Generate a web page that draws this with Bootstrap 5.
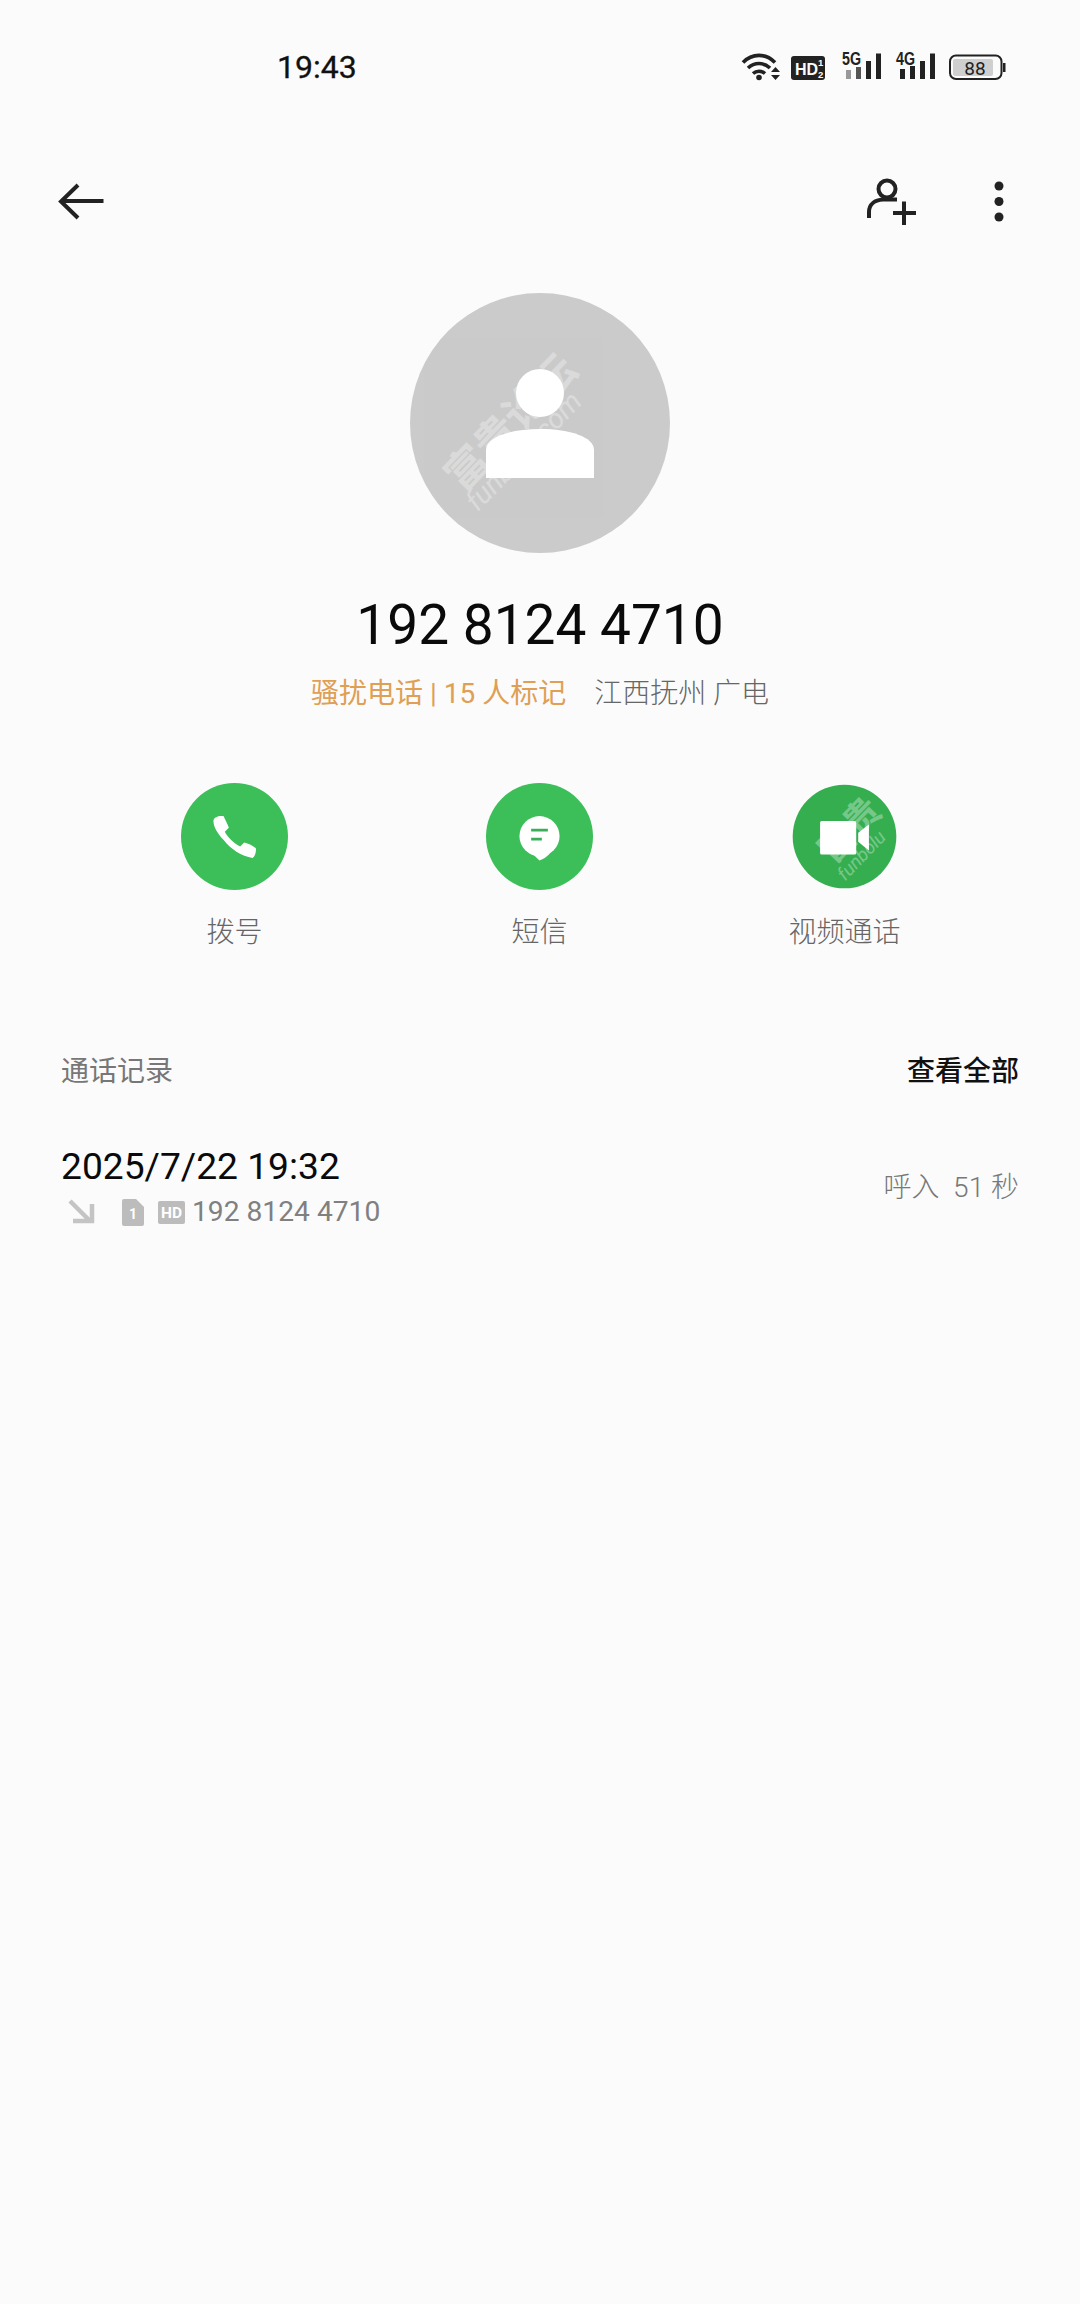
<!doctype html>
<html lang="zh"><head><meta charset="utf-8">
<link href="https://cdn.jsdelivr.net/npm/bootstrap@5.3.0/dist/css/bootstrap.min.css" rel="stylesheet">
<script src="https://cdn.jsdelivr.net/npm/bootstrap@5.3.0/dist/js/bootstrap.bundle.min.js"></script>
<style>
html,body{background:#fbfbfb;}
body{width:1080px;min-height:2304px;font-family:Roboto,"Noto Sans CJK SC",sans-serif;color:#000;}
svg{display:block;}
.statusbar{height:153px;padding:43px 74px 0 277px;}
.clock{font-size:32px;font-weight:400;line-height:48px;color:#111;-webkit-text-stroke:.3px #111;}
.sysicons{margin-top:7px;}
.sysicons text{font-family:"Liberation Sans",sans-serif;font-weight:700;}
.sysicons text.battnum{font-family:Roboto,sans-serif;font-weight:400;}
.topnav{height:96px;padding:0 72px 0 56px;}
.toolset{gap:69px;}
.avatarwrap{margin-top:44px;width:260px;height:260px;border-radius:50%;background:#cbcbcb;overflow:hidden;}
.phone{font-size:55px;line-height:70px;margin-top:37px;color:#0a0a0a;}
.tagline{font-size:28px;line-height:40px;margin-top:14px;font-weight:300;}
.spam{color:#df9f55;font-weight:400;}
.region{color:#666;margin-left:28px;}
.actions{margin-top:69px;padding-right:1px;}
.actcell{width:305px;}
.actcircle{width:107px;height:107px;}
.actlabel{font-size:28px;line-height:40px;color:#666;margin-top:23px;font-weight:300;}
.section{padding:0 61px;margin-top:99px;font-size:28px;line-height:40px;}
.sechead{color:#777;}
.seeall{color:#111;font-weight:500;}
.callrow{padding:0 61px;margin-top:49px;}
.calldate{font-size:37.200px;line-height:50px;color:#0a0a0a;}
.callsub{font-size:28.200px;line-height:36px;color:#808080;margin-top:3px;}
.callnum{margin-left:4px;}
.calldur{font-size:28px;line-height:40px;color:#777;font-weight:300;margin-top:4px;}
.wmark{font-family:"Noto Sans CJK SC",sans-serif;font-weight:700;fill:#fff;}
.wmark-url{font-family:Roboto,sans-serif;font-weight:400;font-style:italic;fill:#fff;}
</style></head><body>

<div class="statusbar d-flex justify-content-between align-items-start">
 <div class="clock">19:43</div>
 <svg class="sysicons" width="266" height="32" viewBox="740 50 266 32">
  <g fill="none" stroke="#222" stroke-width="3.600">
   <path d="M743 62.500C752 53 766 53 775 62.500"/>
   <path d="M748 68C754.500 62 763.500 62 770 68"/>
   <path d="M753 73.500C756.500 70.500 761.500 70.500 765 73.500"/>
  </g>
  <circle cx="759" cy="77.500" r="2.800" fill="#222"/>
  <path d="M771 72L775.500 67L780 72ZM771 75H780L775.500 80Z" fill="#222"/>
  <rect x="791" y="56" width="34" height="24" rx="3" fill="#222"/>
  <text x="795" y="75" font-size="16" fill="#fbfbfb">HD</text>
  <text x="818" y="66" font-size="9.500" fill="#fbfbfb">1</text>
  <text x="818" y="77.500" font-size="9.500" fill="#fbfbfb">2</text>
  <text x="842" y="65" font-size="18" fill="#222" textLength="19" lengthAdjust="spacingAndGlyphs">5G</text>
  <rect x="846" y="70" width="5" height="9" fill="#999"/><rect x="856" y="67" width="5" height="12" fill="#555"/><rect x="866" y="61" width="5" height="18" fill="#222"/><rect x="876" y="53.500" width="5" height="25.500" fill="#222"/>
  <text x="896" y="65" font-size="18" fill="#222" textLength="19" lengthAdjust="spacingAndGlyphs">4G</text>
  <rect x="900" y="69" width="5" height="10" fill="#222"/><rect x="910" y="66" width="5" height="13" fill="#222"/><rect x="920" y="61" width="5" height="18" fill="#222"/><rect x="930" y="53.500" width="5" height="25.500" fill="#222"/>
  <rect x="950" y="55.500" width="51.500" height="23.500" rx="6" fill="none" stroke="#222" stroke-width="2"/>
  <rect x="953" y="59" width="40" height="17" rx="2" fill="#cfcfcf"/>
  <rect x="1003" y="63" width="2.500" height="9" fill="#222"/>
  <text class="battnum" x="975" y="74.500" font-size="19" fill="#222" text-anchor="middle">88</text>
 </svg>
</div>

<nav class="topnav d-flex justify-content-between align-items-center">
 <svg width="50" height="48" viewBox="56 177 50 48" fill="none" stroke="#222" stroke-width="4">
  <path d="M103.500 201H62"/><path d="M78 185L61 201.500L78 218"/>
 </svg>
 <div class="toolset d-flex align-items-center">
  <svg width="56" height="54" viewBox="866 174 56 54" fill="none" stroke="#222" stroke-width="4">
   <circle cx="888" cy="189" r="8.500"/>
   <path d="M870 218V212C870 204 876 200 884 199.500H898"/>
   <path d="M894 213H917M905 201.500V225"/>
  </svg>
  <svg width="18" height="54" viewBox="990 174 18 54" fill="#222">
   <circle cx="999" cy="186" r="4.500"/><circle cx="999" cy="201.500" r="4.500"/><circle cx="999" cy="217" r="4.500"/>
  </svg>
 </div>
</nav>

<div class="avatarwrap mx-auto">
 <svg width="260" height="260" viewBox="0 0 260 260">
  <g transform="translate(53 200) rotate(-46)" opacity=".3">
   <text class="wmark" x="0" y="0" font-size="42">富贵论坛</text>
   <text class="wmark-url" x="-4" y="24" font-size="28">funbolu.com</text>
  </g>
  <circle cx="130" cy="100" r="24" fill="#fff"/>
  <path d="M76 185V157C76 144 100 136 130 136C160 136 184 144 184 157V185Z" fill="#fff"/>
 </svg>
</div>

<div class="phone text-center">192 8124 4710</div>
<div class="tagline text-center"><span class="spam">骚扰电话 | 15 人标记</span><span class="region">江西抚州 广电</span></div>

<div class="actions d-flex justify-content-center">
 <div class="actcell d-flex flex-column align-items-center">
  <svg class="actcircle" viewBox="33 38 320 320">
   <circle cx="193" cy="198" r="160" fill="#3cbf58"/>
   <path d="M130 150C132 140 145 135 160 137C166 150 172 160 176 172L164 184C172 200 192 220 210 228L222 216C235 219 248 226 257 233C258 245 254 258 247 262C215 258 180 235 160 208C142 188 130 170 130 150Z" fill="#fff"/>
  </svg>
  <div class="actlabel">拨号</div>
 </div>
 <div class="actcell d-flex flex-column align-items-center">
  <svg class="actcircle" viewBox="33 38 320 320">
   <circle cx="193" cy="198" r="160" fill="#3cbf58"/>
   <circle cx="193" cy="197" r="60" fill="#fff"/>
   <path d="M170 248L193 270C204 266 216 258 225 248Z" fill="#fff"/>
   <path d="M168 175H218V183H168ZM168 202H200V210H168Z" fill="#3aae58"/>
  </svg>
  <div class="actlabel">短信</div>
 </div>
 <div class="actcell d-flex flex-column align-items-center">
  <svg class="actcircle" viewBox="33 36 320 320">
   <circle cx="193" cy="196" r="155" fill="#35ae50"/>
   <g transform="translate(160 280) rotate(-46)" opacity=".32">
    <text class="wmark" x="0" y="0" font-size="108">富贵</text>
    <text class="wmark-url" x="-12" y="60" font-size="55">funbolu</text>
   </g>
   <rect x="120" y="150" width="108" height="100" rx="5" fill="#fff"/>
   <path d="M234 185L266 160V238L234 212Z" fill="#fff"/>
  </svg>
  <div class="actlabel">视频通话</div>
 </div>
</div>

<div class="section d-flex justify-content-between">
 <div class="sechead">通话记录</div>
 <div class="seeall">查看全部</div>
</div>

<div class="callrow d-flex justify-content-between align-items-center">
 <div>
  <div class="calldate">2025/7/22 19:32</div>
  <div class="callsub d-flex align-items-center">
   <svg width="127" height="36" viewBox="61 1194 127 36">
    <path d="M70 1201L90 1221M92 1204V1221H73" fill="none" stroke="#c4c4c4" stroke-width="4.500"/>
    <path d="M124 1199H136L144 1207V1224Q144 1226 142 1226H124Q122 1226 122 1224V1201Q122 1199 124 1199Z" fill="#bcbcbc"/>
    <text x="133" y="1219" font-size="14" fill="#fff" text-anchor="middle" font-weight="700">1</text>
    <rect x="158" y="1201" width="27" height="23" rx="2" fill="#bcbcbc"/>
    <text x="171.500" y="1218" font-size="15.500" fill="#fff" text-anchor="middle" font-weight="700">HD</text>
   </svg>
   <span class="callnum">192 8124 4710</span>
  </div>
 </div>
 <div class="calldur">呼入&nbsp; 51 秒</div>
</div>

</body></html>
